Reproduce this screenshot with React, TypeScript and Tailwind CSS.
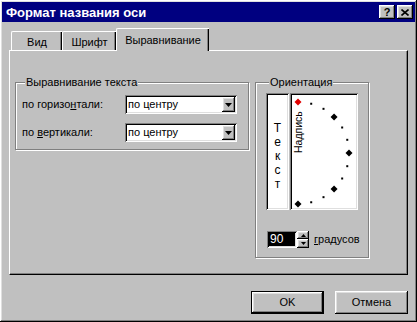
import React from "react";

const raised =
  "shadow-[inset_-1px_-1px_#000,inset_1px_1px_#fff,inset_-2px_-2px_#808080,inset_2px_2px_#dfdfdf]";
const sunken =
  "shadow-[inset_1px_1px_#808080,inset_-1px_-1px_#fff,inset_2px_2px_#000,inset_-2px_-2px_#dfdfdf]";
const etched = "border border-[#808080] shadow-[1px_1px_0_#fff,inset_1px_1px_0_#fff]";

function DownArrow() {
  return (
    <svg width="7" height="4" viewBox="0 0 7 4">
      <path d="M0 0h7L3.5 4z" fill="#000" />
    </svg>
  );
}

function Combo() {
  return (
    <div className={`w-[112px] h-[19px] bg-white p-[2px] flex items-center ${sunken}`}>
      <span className="flex-1 pl-[1px] leading-[15px]">по центру</span>
      <div className={`w-[13px] h-[15px] bg-[#c0c0c0] flex items-center justify-center ${raised}`}>
        <DownArrow />
      </div>
    </div>
  );
}

function Dial() {
  const cx = 6;
  const cy = 58;
  const r = 51;
  const angles = [90, 75, 60, 45, 30, 15, 0, -15, -30, -45, -60, -75, -90];
  return (
    <svg width="64" height="113" viewBox="0 0 64 113">
      {angles.map((a) => {
        const x = cx + r * Math.cos((a * Math.PI) / 180);
        const y = cy - r * Math.sin((a * Math.PI) / 180);
        const big = a % 45 === 0;
        if (!big) return <rect key={a} x={x - 1} y={y - 1} width="2" height="2" fill="#000" />;
        const d = `M${x} ${y - 3.5}L${x + 3.5} ${y}L${x} ${y + 3.5}L${x - 3.5} ${y}Z`;
        return <path key={a} d={d} fill={a === 90 ? "#e00000" : "#000"} />;
      })}
      <text
        x="0"
        y="0"
        transform="translate(10 58) rotate(-90)"
        fontSize="10.5"
        fontFamily="Liberation Sans, Arial, sans-serif"
        fill="#000"
      >
        Надпись
      </text>
    </svg>
  );
}

export default function App() {
  return (
    <div
      className={`w-[417px] h-[322px] overflow-hidden bg-[#c0c0c0] p-[2px] text-[11px] text-black font-['Liberation_Sans',Arial,sans-serif] ${raised}`}
    >
      <div className="h-[20px] bg-[#000080] flex items-center pl-[4px] pr-[2px]">
        <span className="text-white font-bold text-[13px] leading-none">Формат названия оси</span>
        <div className="ml-auto flex gap-[2px]">
          <div className={`w-[16px] h-[14px] bg-[#c0c0c0] flex items-center justify-center font-bold text-[11px] leading-none ${raised}`}>
            ?
          </div>
          <div className={`w-[16px] h-[14px] bg-[#c0c0c0] flex items-center justify-center ${raised}`}>
            <svg width="8" height="7" viewBox="0 0 8 7">
              <path d="M0.5 0.5L7.5 6.5M7.5 0.5L0.5 6.5" stroke="#000" strokeWidth="1.6" />
            </svg>
          </div>
        </div>
      </div>

      <div className="pt-[6px] px-[7px]">
        <div className="flex items-end h-[22px] pl-[2px]">
          <div className="w-[51px] h-[19px] border-l border-t border-white rounded-tl-[2px] shadow-[inset_-1px_0_#000,inset_-2px_0_#808080] flex items-center justify-center pt-[3px]">
            Вид
          </div>
          <div className="w-[54px] h-[19px] border-l border-t border-white rounded-tl-[2px] shadow-[inset_-1px_0_#000,inset_-2px_0_#808080] flex items-center justify-center pt-[3px]">
            Шрифт
          </div>
          <div className="relative z-10 -mb-px w-[93px] h-[23px] bg-[#c0c0c0] border-l border-t border-white rounded-tl-[2px] shadow-[inset_-1px_0_#000,inset_-2px_0_#808080] flex items-center justify-center pt-[1px]">
            Выравнивание
          </div>
        </div>

        <div className="h-[225px] border border-t-white border-l-white border-r-black border-b-black shadow-[inset_-1px_-1px_#808080] pl-[5px] pt-[25px] flex gap-[6px] items-start">
          <fieldset className={`w-[234px] h-[74px] ${etched} px-[6px]`}>
            <legend className="ml-[3px] px-[1px] leading-[13px] bg-[#c0c0c0]">Выравнивание текста</legend>
            <div className="flex flex-col gap-[9px] pt-[6px]">
              <div className="flex items-center">
                <span className="w-[103px]">
                  по горизо<span className="underline">н</span>тали:
                </span>
                <Combo />
              </div>
              <div className="flex items-center">
                <span className="w-[103px]">
                  по <span className="underline">в</span>ертикали:
                </span>
                <Combo />
              </div>
            </div>
          </fieldset>

          <fieldset className={`w-[114px] h-[182px] ${etched} pl-[10px]`}>
            <legend className="ml-[3px] px-[1px] leading-[13px] bg-[#c0c0c0]">Ориентация</legend>
            <div className="pt-[4px] flex gap-[1px]">
              <div className={`w-[23px] h-[117px] bg-white ${sunken} flex flex-col items-center justify-center pt-[8px] leading-[14px] text-[12px]`}>
                <span>Т</span>
                <span>е</span>
                <span>к</span>
                <span>с</span>
                <span>т</span>
              </div>
              <div className={`w-[68px] h-[117px] bg-white p-[2px] ${sunken}`}>
                <Dial />
              </div>
            </div>
            <div className="mt-[21px] ml-px flex items-center">
              <div className={`w-[30px] h-[17px] bg-white p-[2px] ${sunken}`}>
                <div className="h-full bg-black text-white leading-[13px] pl-[1px] text-[12px]">90</div>
              </div>
              <div className="flex flex-col">
                <div className={`w-[12px] h-[8px] bg-[#c0c0c0] flex items-center justify-center ${raised}`}>
                  <svg width="5" height="3" viewBox="0 0 5 3">
                    <path d="M0 3h5L2.5 0z" fill="#000" />
                  </svg>
                </div>
                <div className={`w-[12px] h-[9px] bg-[#c0c0c0] flex items-center justify-center ${raised}`}>
                  <svg width="5" height="3" viewBox="0 0 5 3">
                    <path d="M0 0h5L2.5 3z" fill="#000" />
                  </svg>
                </div>
              </div>
              <span className="ml-[5px]">
                <span className="underline">г</span>радусов
              </span>
            </div>
          </fieldset>
        </div>

        <div className="mt-[16px] flex justify-end gap-[11px]">
          <div className="w-[73px] h-[23px] border border-black">
            <div className={`w-full h-full flex items-center justify-center ${raised}`}>OK</div>
          </div>
          <div className={`w-[73px] h-[23px] flex items-center justify-center ${raised}`}>Отмена</div>
        </div>
      </div>
    </div>
  );
}
